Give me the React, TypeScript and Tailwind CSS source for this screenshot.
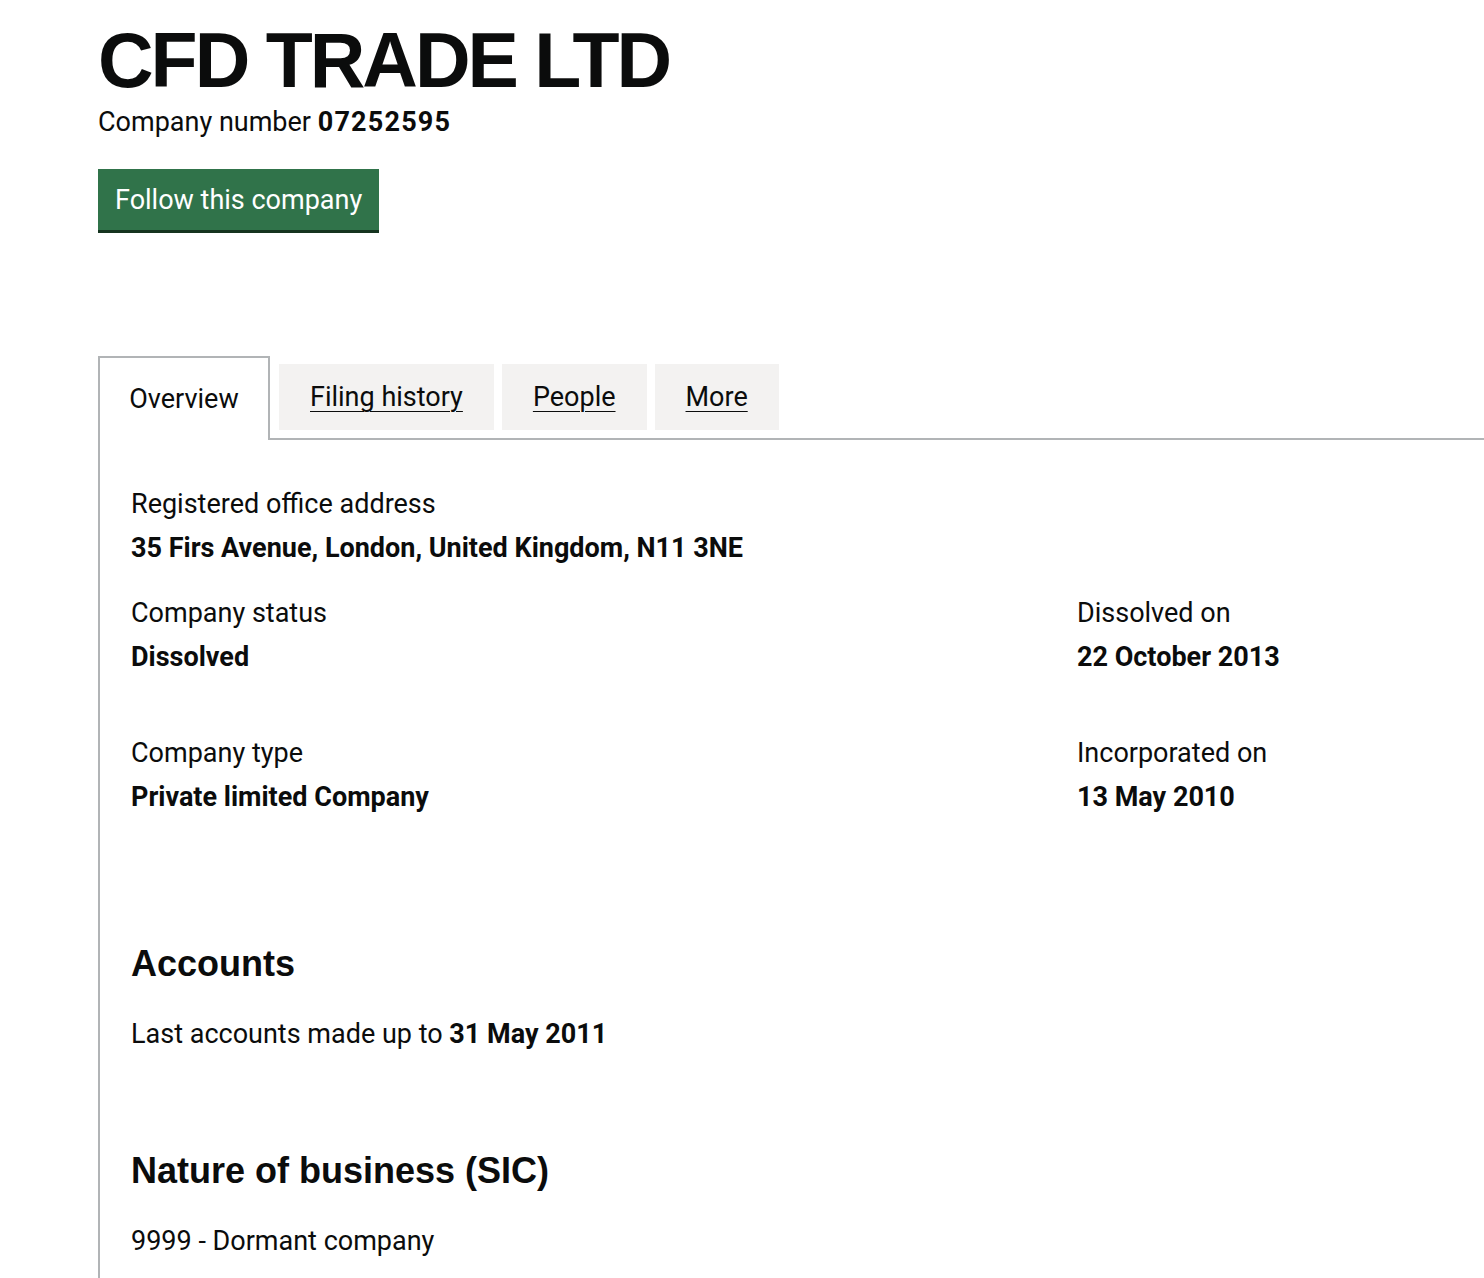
const bodyFont = "font-['Roboto','Liberation_Sans',sans-serif]";
const headFont = "font-['Liberation_Sans',Arial,sans-serif]";

function Field({ label, value }: { label: string; value: string }) {
    return (
        <div>
            <p className="text-[27px] leading-[32px]">{label}</p>
            <p className="mt-[12px] text-[27px] leading-[32px] font-bold">{value}</p>
        </div>
    );
}

export default function App() {
    const tabs = ['Filing history', 'People', 'More'];
    return (
        <div className={`min-h-screen bg-white text-[#0b0c0c] pl-[98px] pt-[22px] ${bodyFont}`}>
            <h1 className={`${headFont} text-[77px] leading-[77px] font-bold tracking-[-3px]`}>CFD TRADE LTD</h1>
            <p className="mt-[7px] text-[27px] leading-[32px]">
                Company number <strong className="font-bold tracking-[1.2px]">07252595</strong>
            </p>
            <button className="mt-[31px] h-[61px] px-[17px] bg-[#30734a] text-white text-[27px] leading-[32px] shadow-[0_3px_0_#15341f]">
                Follow this company
            </button>

            <div className="mt-[126px] flex items-end border-b-2 border-[#b1b4b6]">
                <div className="-mb-[2px] h-[84px] w-[172px] flex items-center justify-center border-2 border-b-0 border-[#b1b4b6] bg-white text-[27px]">
                    Overview
                </div>
                <div className="ml-[9px] flex gap-[8px] mb-[8px]">
                    {tabs.map((t) => (
                        <a key={t} href="#" className="h-[66px] px-[31px] flex items-center bg-[#f3f2f1] text-[27px] underline underline-offset-[5px] decoration-1">
                            {t}
                        </a>
                    ))}
                </div>
            </div>

            <div className="border-l-2 border-[#b1b4b6] pl-[31px] pt-[48px] pb-[40px]">
                <Field label="Registered office address" value="35 Firs Avenue, London, United Kingdom, N11 3NE" />
                <div className="mt-[33px] flex">
                    <div className="w-[946px]">
                        <Field label="Company status" value="Dissolved" />
                    </div>
                    <Field label="Dissolved on" value="22 October 2013" />
                </div>
                <div className="mt-[64px] flex">
                    <div className="w-[946px]">
                        <Field label="Company type" value="Private limited Company" />
                    </div>
                    <Field label="Incorporated on" value="13 May 2010" />
                </div>

                <h2 className={`${headFont} mt-[129px] text-[36px] leading-[44px] font-bold`}>Accounts</h2>
                <p className="mt-[32px] text-[27px] leading-[32px]">
                    Last accounts made up to <strong className="font-bold">31 May 2011</strong>
                </p>

                <h2 className={`${headFont} mt-[99px] text-[36px] leading-[44px] font-bold`}>Nature of business (SIC)</h2>
                <p className="mt-[32px] text-[27px] leading-[32px]">9999 - Dormant company</p>
            </div>
        </div>
    );
}
